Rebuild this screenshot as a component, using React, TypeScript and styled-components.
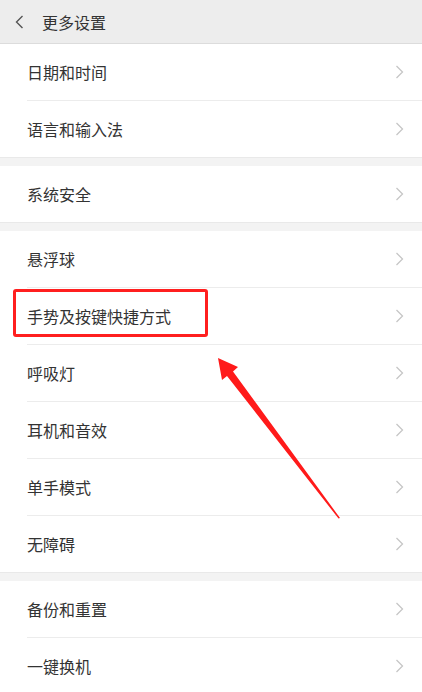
import React from "react";
import styled, { createGlobalStyle } from "styled-components";

const Global = createGlobalStyle`
  html, body { margin: 0; padding: 0; background: #f3f3f3; }
  body { font-family: "Noto Sans CJK SC", "Noto Sans", sans-serif; }
`;

const Page = styled.div`
  position: relative;
  width: 422px;
  height: 692px;
  overflow: hidden;
  background: #f3f3f3;
`;

const Header = styled.div`
  height: 43px;
  display: flex;
  align-items: center;
  background: #ededed;
  border-bottom: 1px solid #dcdcdc;
`;

const BackBtn = styled.div`
  width: 42px;
  display: flex;
  align-items: center;
  padding-left: 15px;
  box-sizing: border-box;
`;

const Title = styled.div`
  font-size: 16px;
  color: #333;
`;

const Group = styled.div`
  background: #fff;
  border-bottom: 1px solid #e9e9e9;
  margin-bottom: 8px;
`;

const Row = styled.div<{ $last?: boolean }>`
  height: 56px;
  display: flex;
  align-items: center;
  margin-left: 27px;
  padding-right: 18px;
  border-bottom: ${(p) => (p.$last ? "none" : "1px solid #ececec")};
`;

const Label = styled.div`
  flex: 1;
  font-size: 16px;
  color: #333;
`;

const Highlight = styled.div`
  position: absolute;
  left: 13px;
  top: 289px;
  width: 195px;
  height: 48px;
  box-sizing: border-box;
  border: 3px solid #ff1f1f;
  border-radius: 3px;
`;

const ArrowSvg = styled.svg`
  position: absolute;
  left: 0;
  top: 0;
  pointer-events: none;
`;

const Chevron = () => (
  <svg width="9" height="14" viewBox="0 0 9 14">
    <polyline points="1.5,1 7.5,7 1.5,13" fill="none" stroke="#c6c6c6" strokeWidth="1.3" />
  </svg>
);

const BackIcon = () => (
  <svg width="9" height="14" viewBox="0 0 9 14">
    <polyline points="7.5,1 1.5,7 7.5,13" fill="none" stroke="#555" strokeWidth="1.4" />
  </svg>
);

const groups: string[][] = [
  ["日期和时间", "语言和输入法"],
  ["系统安全"],
  ["悬浮球", "手势及按键快捷方式", "呼吸灯", "耳机和音效", "单手模式", "无障碍"],
  ["备份和重置", "一键换机"],
];

export default function App() {
  return (
    <>
      <Global />
      <Page>
        <Header>
          <BackBtn>
            <BackIcon />
          </BackBtn>
          <Title>更多设置</Title>
        </Header>
        {groups.map((g, gi) => (
          <Group key={gi}>
            {g.map((label, i) => (
              <Row key={label} $last={i === g.length - 1}>
                <Label>{label}</Label>
                <Chevron />
              </Row>
            ))}
          </Group>
        ))}
        <Highlight />
        <ArrowSvg width="422" height="692" viewBox="0 0 422 692">
          <polygon
            points="218,358 238,367 233,371.5 340,518 338.5,518.5 227,376 222,380"
            fill="#ff1a1a"
          />
        </ArrowSvg>
      </Page>
    </>
  );
}
